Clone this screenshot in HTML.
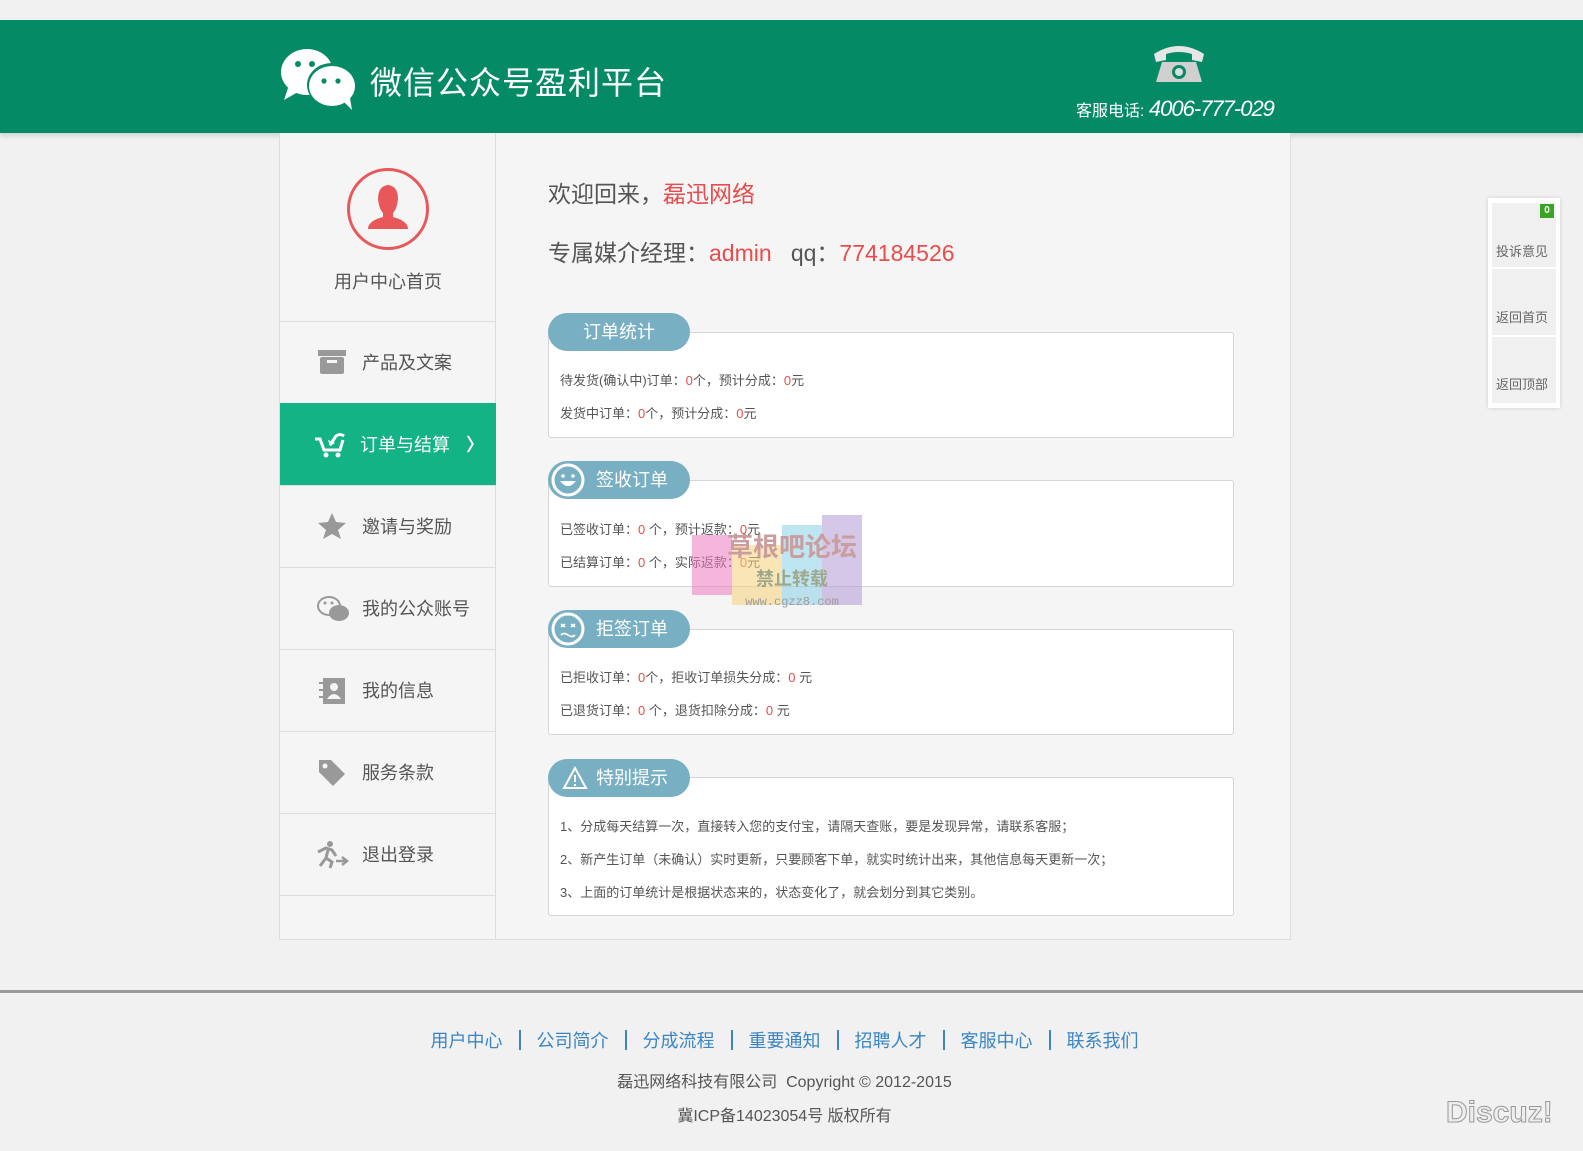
<!DOCTYPE html>
<html><head><meta charset="utf-8"><style>
*{margin:0;padding:0;box-sizing:border-box}
body{width:1583px;height:1151px;background:#f1f1f1;font-family:"Liberation Sans","Noto Sans CJK SC",sans-serif;position:relative;overflow:hidden;color:#555}
.hd{position:absolute;left:0;top:20px;width:1583px;height:113px;background:#058a66;box-shadow:0 3px 4px rgba(0,0,0,.12)}
.abs{position:absolute}
.wrap{position:absolute;left:279px;top:133px;width:1012px;height:807px;background:#f5f5f5;border:1px solid #ddd;border-top:none}
.side{position:absolute;left:0;top:0;width:216px;height:806px;border-right:1px solid #ddd}
.mi{position:absolute;left:0;width:216px;height:82px;border-top:1px solid #ddd;font-size:18px;color:#555;line-height:82px}
.mi span{position:absolute;left:82px}
.mi svg{position:absolute;left:37px;top:26px}
.act{background:#13b386;color:#fff;border-top:1px solid #13b386}
.card{position:absolute;left:268px;width:686px;background:#fff;border:1px solid #d5d5d5;border-radius:3px}
.tab{position:absolute;left:268px;width:142px;height:38px;background:#78afc3;border-radius:19px;color:#fff;font-size:18px;line-height:38px}
.ln{position:absolute;left:11px;font-size:13px;color:#555;white-space:nowrap}
.r{color:#e84c4c}
.ft{position:absolute;left:0;top:990px;width:1583px;height:3px;background:#999}
.links{position:absolute;top:1027px;left:0;width:1569px;text-align:center;font-size:18px;color:#3a85c6}
.links i{font-style:normal;display:inline-block;width:2px;height:20px;background:#3a85c6;margin:0 16px;vertical-align:-3px}
</style></head><body>
<div class="hd">
<svg class="abs" style="left:280px;top:28px" width="78" height="64" viewBox="0 0 78 64"><ellipse cx="27" cy="24" rx="26" ry="23" fill="#fff"/><path d="M8 40 L4 52 L18 44Z" fill="#fff"/><ellipse cx="52" cy="37" rx="25" ry="22" fill="#058a66"/><ellipse cx="52" cy="38" rx="23" ry="20" fill="#fff"/><path d="M64 54 L72 62 L70 50Z" fill="#fff"/><circle cx="18" cy="16" r="3" fill="#058a66"/><circle cx="32" cy="16" r="3" fill="#058a66"/><circle cx="44" cy="33" r="2.6" fill="#058a66"/><circle cx="58" cy="33" r="2.6" fill="#058a66"/></svg>
<div class="abs" style="left:370px;top:38px;font-size:32px;color:#fff;letter-spacing:1px">微信公众号盈利平台</div>
<svg class="abs" style="left:1148px;top:20px" width="62" height="46" viewBox="0 0 62 46"><path d="M6 14 Q31 -2 56 14 L54 22 L44 20 L44 14 Q31 10 18 14 L18 20 L8 22Z" fill="#e6e6e6"/><path d="M14 22 L48 22 L54 42 L8 42Z" fill="#d0d0d0"/><circle cx="31" cy="32" r="7" fill="#058a66"/><circle cx="31" cy="32" r="4" fill="#ddd"/></svg>
<div class="abs" style="left:1076px;top:76px;font-size:16px;color:#fff">客服电话: <span style="font-size:22px;font-style:italic;letter-spacing:-1px">4006-777-029</span></div>
</div>
<div class="wrap">
<div class="side">
<svg class="abs" style="left:66px;top:34px" width="84" height="84" viewBox="0 0 84 84"><circle cx="42" cy="42" r="39.5" fill="none" stroke="#e8585a" stroke-width="3"/><path d="M42 18 Q52 19 52 32 Q51 42 47 46 L47 50 Q62 54 62 62 L22 62 Q22 54 37 50 L37 46 Q33 42 32 32 Q32 19 42 18Z" fill="#e8585a"/></svg>
<div class="abs" style="left:0;top:135px;width:216px;text-align:center;font-size:18px;color:#555">用户中心首页</div>
<div class="mi" style="top:188px"><svg width="30" height="28" viewBox="0 0 30 28"><rect x="1" y="2" width="28" height="6" fill="#999"/><rect x="3" y="9" width="24" height="17" rx="2" fill="#999"/><rect x="10" y="12" width="10" height="3" fill="#f5f5f5"/></svg><span>产品及文案</span></div>
<div class="mi act" style="top:270px"><svg width="34" height="30" viewBox="0 0 34 30" style="left:34px"><path d="M1 9 L6 9 L10 20 L26 20 L29 10" fill="none" stroke="#fff" stroke-width="3"/><circle cx="12" cy="25" r="2.5" fill="#fff"/><circle cx="24" cy="25" r="2.5" fill="#fff"/><path d="M16 15 L22 6 Q26 3 30 6" fill="none" stroke="#fff" stroke-width="3"/><path d="M14 10 L16 16 L21 13" fill="#fff"/></svg><span style="left:80px">订单与结算</span><span style="left:186px;font-weight:bold">〉</span></div>
<div class="mi" style="top:352px"><svg width="30" height="28" viewBox="0 0 30 28"><path d="M15 1 L19 10 L29 11 L21 18 L24 27 L15 22 L6 27 L9 18 L1 11 L11 10Z" fill="#999"/></svg><span>邀请与奖励</span></div>
<div class="mi" style="top:434px"><svg width="34" height="30" viewBox="0 0 34 30"><ellipse cx="12" cy="12" rx="11" ry="9" fill="none" stroke="#999" stroke-width="2"/><ellipse cx="22" cy="19" rx="10" ry="8" fill="#999"/><circle cx="8" cy="9" r="1.5" fill="#999"/><circle cx="15" cy="9" r="1.5" fill="#999"/></svg><span>我的公众账号</span></div>
<div class="mi" style="top:516px"><svg width="30" height="30" viewBox="0 0 30 30"><rect x="6" y="2" width="22" height="26" fill="#999"/><rect x="2" y="6" width="6" height="2" fill="#999"/><rect x="2" y="13" width="6" height="2" fill="#999"/><rect x="2" y="20" width="6" height="2" fill="#999"/><circle cx="17" cy="11" r="4" fill="#f5f5f5"/><path d="M10 23 Q17 13 24 23Z" fill="#f5f5f5"/></svg><span>我的信息</span></div>
<div class="mi" style="top:598px"><svg width="30" height="30" viewBox="0 0 30 30"><path d="M2 2 L14 2 L28 16 L16 28 L2 14Z" fill="#999"/><circle cx="8" cy="8" r="2.5" fill="#f5f5f5"/></svg><span>服务条款</span></div>
<div class="mi" style="top:680px"><svg width="36" height="30" viewBox="0 0 36 30" style="left:34px"><circle cx="16" cy="4" r="3" fill="#999"/><path d="M4 12 L12 8 L18 10 L22 16 M14 10 L12 18 L18 22 L16 28 M12 18 L6 26" fill="none" stroke="#999" stroke-width="3"/><path d="M22 21 L32 21 M28 17 L33 21 L28 25" fill="none" stroke="#999" stroke-width="2.5"/></svg><span>退出登录</span></div>
<div class="mi" style="top:762px;height:44px"></div>
</div>
<div class="abs" style="left:268px;top:42px;font-size:23px;color:#555">欢迎回来，<span class="r">磊迅网络</span></div>
<div class="abs" style="left:268px;top:101px;font-size:23px;color:#555">专属媒介经理：<span class="r">admin</span> &nbsp; qq：<span class="r">774184526</span></div>

<div class="card" style="top:199px;height:106px"><div class="ln" style="top:37px">待发货(确认中)订单：<span class="r">0</span>个，预计分成：<span class="r">0</span>元</div><div class="ln" style="top:70px">发货中订单：<span class="r">0</span>个，预计分成：<span class="r">0</span>元</div></div>
<div class="tab" style="top:180px;text-align:center">订单统计</div>

<div class="card" style="top:347px;height:107px"><div class="ln" style="top:38px">已签收订单：<span class="r">0</span> 个，预计返款：<span class="r">0</span>元</div><div class="ln" style="top:71px">已结算订单：<span class="r">0</span> 个，实际返款：<span class="r">0</span>元</div></div>
<div class="tab" style="top:328px"><svg class="abs" style="left:3px;top:2px" width="34" height="34" viewBox="0 0 34 34"><circle cx="17" cy="17" r="15" fill="none" stroke="#fff" stroke-width="3"/><circle cx="12" cy="13" r="1.8" fill="#fff"/><circle cx="22" cy="13" r="1.8" fill="#fff"/><path d="M9 18 Q17 28 25 18Z" fill="#fff"/></svg><span style="position:absolute;left:48px">签收订单</span></div>

<div class="card" style="top:496px;height:106px"><div class="ln" style="top:37px">已拒收订单：<span class="r">0</span>个，拒收订单损失分成：<span class="r">0</span> 元</div><div class="ln" style="top:70px">已退货订单：<span class="r">0</span> 个，退货扣除分成：<span class="r">0</span> 元</div></div>
<div class="tab" style="top:477px"><svg class="abs" style="left:3px;top:2px" width="34" height="34" viewBox="0 0 34 34"><circle cx="17" cy="17" r="15" fill="none" stroke="#fff" stroke-width="3"/><path d="M10 12 L14 15 M14 12 L10 15 M20 12 L24 15 M24 12 L20 15 M10 23 Q13 20 17 23 Q21 26 24 23" fill="none" stroke="#fff" stroke-width="1.6"/></svg><span style="position:absolute;left:48px">拒签订单</span></div>

<div class="card" style="top:644px;height:139px"><div class="ln" style="top:38px">1、分成每天结算一次，直接转入您的支付宝，请隔天查账，要是发现异常，请联系客服；</div><div class="ln" style="top:71px">2、新产生订单（未确认）实时更新，只要顾客下单，就实时统计出来，其他信息每天更新一次；</div><div class="ln" style="top:104px">3、上面的订单统计是根据状态来的，状态变化了，就会划分到其它类别。</div></div>
<div class="tab" style="top:626px"><svg class="abs" style="left:14px;top:7px" width="26" height="24" viewBox="0 0 26 24"><path d="M13 2 L24 22 L2 22Z" fill="none" stroke="#fff" stroke-width="2"/><rect x="12" y="9" width="2" height="7" fill="#fff"/><rect x="12" y="18" width="2" height="2" fill="#fff"/></svg><span style="position:absolute;left:48px">特别提示</span></div>

<div class="abs" style="left:412px;top:382px;width:180px;height:110px;opacity:.55">
<div class="abs" style="left:0;top:20px;width:40px;height:60px;background:#f07ac0"></div>
<div class="abs" style="left:40px;top:30px;width:50px;height:60px;background:#f7d27a"></div>
<div class="abs" style="left:90px;top:10px;width:40px;height:80px;background:#8ad0e8"></div>
<div class="abs" style="left:130px;top:0;width:40px;height:90px;background:#b39ad6"></div>
<div class="abs" style="left:20px;top:12px;width:160px;text-align:center;font-size:26px;font-weight:bold;color:#a05050">草根吧论坛</div>
<div class="abs" style="left:20px;top:50px;width:160px;text-align:center;font-size:18px;font-weight:bold;color:#506030">禁止转载</div>
<div class="abs" style="left:20px;top:80px;width:160px;text-align:center;font-size:12px;font-family:'Liberation Mono',monospace;color:#555">www.cgzz8.com</div>
</div>
</div>

<div class="abs" style="left:1488px;top:198px;width:72px;height:210px;background:#fff;box-shadow:0 0 4px rgba(0,0,0,.15)">
<div class="abs" style="left:4px;top:5px;width:64px;height:64px;background:#f0f0f0"></div>
<div class="abs" style="left:4px;top:71px;width:64px;height:66px;background:#f0f0f0"></div>
<div class="abs" style="left:4px;top:139px;width:64px;height:66px;background:#f0f0f0"></div>
<div class="abs" style="left:52px;top:6px;width:14px;height:14px;background:#3aa525;color:#fff;font-size:10px;font-weight:bold;text-align:center;line-height:14px">0</div>
<div class="abs" style="left:8px;top:43px;font-size:13px;color:#666">投诉意见</div>
<div class="abs" style="left:8px;top:109px;font-size:13px;color:#666">返回首页</div>
<div class="abs" style="left:8px;top:176px;font-size:13px;color:#666">返回顶部</div>
</div>

<div class="ft"></div>
<div class="links">用户中心<i></i>公司简介<i></i>分成流程<i></i>重要通知<i></i>招聘人才<i></i>客服中心<i></i>联系我们</div>
<div class="abs" style="left:0;top:1068px;width:1569px;text-align:center;font-size:16px;color:#555">磊迅网络科技有限公司 &nbsp;Copyright © 2012-2015</div>
<div class="abs" style="left:0;top:1102px;width:1569px;text-align:center;font-size:16px;color:#555">冀ICP备14023054号 版权所有</div>
<div class="abs" style="left:1446px;top:1096px;font-size:30px;font-weight:bold;color:#eee;-webkit-text-stroke:1px #999">Discuz!</div>
</body></html>
